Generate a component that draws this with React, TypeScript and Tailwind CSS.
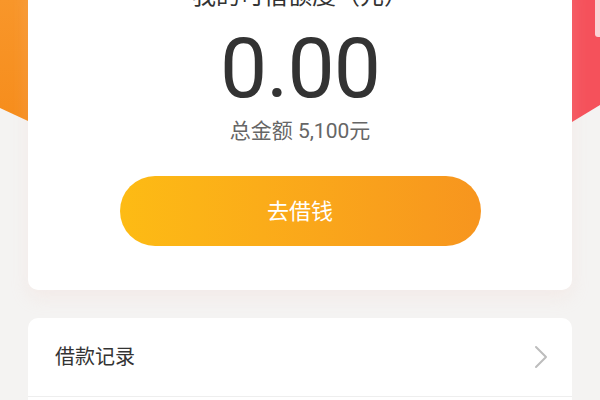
import React from "react";

export default function App() {
  return (
    <div className="relative w-[600px] h-[400px] overflow-hidden bg-[#f4f3f2] font-['Roboto','Noto_Sans_CJK_SC',sans-serif]">
      <svg className="absolute left-0 top-0" width="600" height="130" viewBox="0 0 600 130">
        <defs>
          <linearGradient id="og" x1="0" y1="0" x2="0" y2="1">
            <stop offset="0" stopColor="#f8962a" />
            <stop offset="1" stopColor="#f68d1c" />
          </linearGradient>
        </defs>
        <polygon points="0,0 28,0 28,121 0,108" fill="url(#og)" />
        <polygon points="572,0 600,0 600,105 572,122" fill="#f5515b" />
        <rect x="595" y="-6" width="12" height="43" rx="3" fill="#fbd2d4" />
      </svg>
      <div className="relative mx-[28px] -mt-[20px] bg-white rounded-b-[10px] flex flex-col items-center pb-[44px] shadow-[0_8px_18px_rgba(245,205,195,0.2)]">
        <div className="text-[24px] leading-[32px] text-[#333]">我的可借额度（元）</div>
        <div className="mt-[15px] text-[84px] leading-[84px] text-[#333] tracking-[-1px]">0.00</div>
        <div className="mt-[6px] text-[21px] leading-[28px] text-[#666]">总金额 5,100元</div>
        <button className="mt-[31px] w-[361px] h-[70px] rounded-full bg-gradient-to-r from-[#fdbb14] to-[#f7951e] text-white text-[22px] flex items-center justify-center">
          去借钱
        </button>
      </div>
      <div className="mx-[28px] mt-[28px] bg-white rounded-t-[10px]">
        <div className="h-[79px] flex items-center justify-between pl-[27px] pr-[24px] border-b border-[#eeeeee]">
          <span className="text-[20px] text-[#333]">借款记录</span>
          <svg width="14" height="24" viewBox="0 0 14 24" fill="none">
            <path d="M2 2 L12 12 L2 22" stroke="#bdbdbd" strokeWidth="2" strokeLinecap="round" strokeLinejoin="round" />
          </svg>
        </div>
        <div className="h-[40px]" />
      </div>
    </div>
  );
}
